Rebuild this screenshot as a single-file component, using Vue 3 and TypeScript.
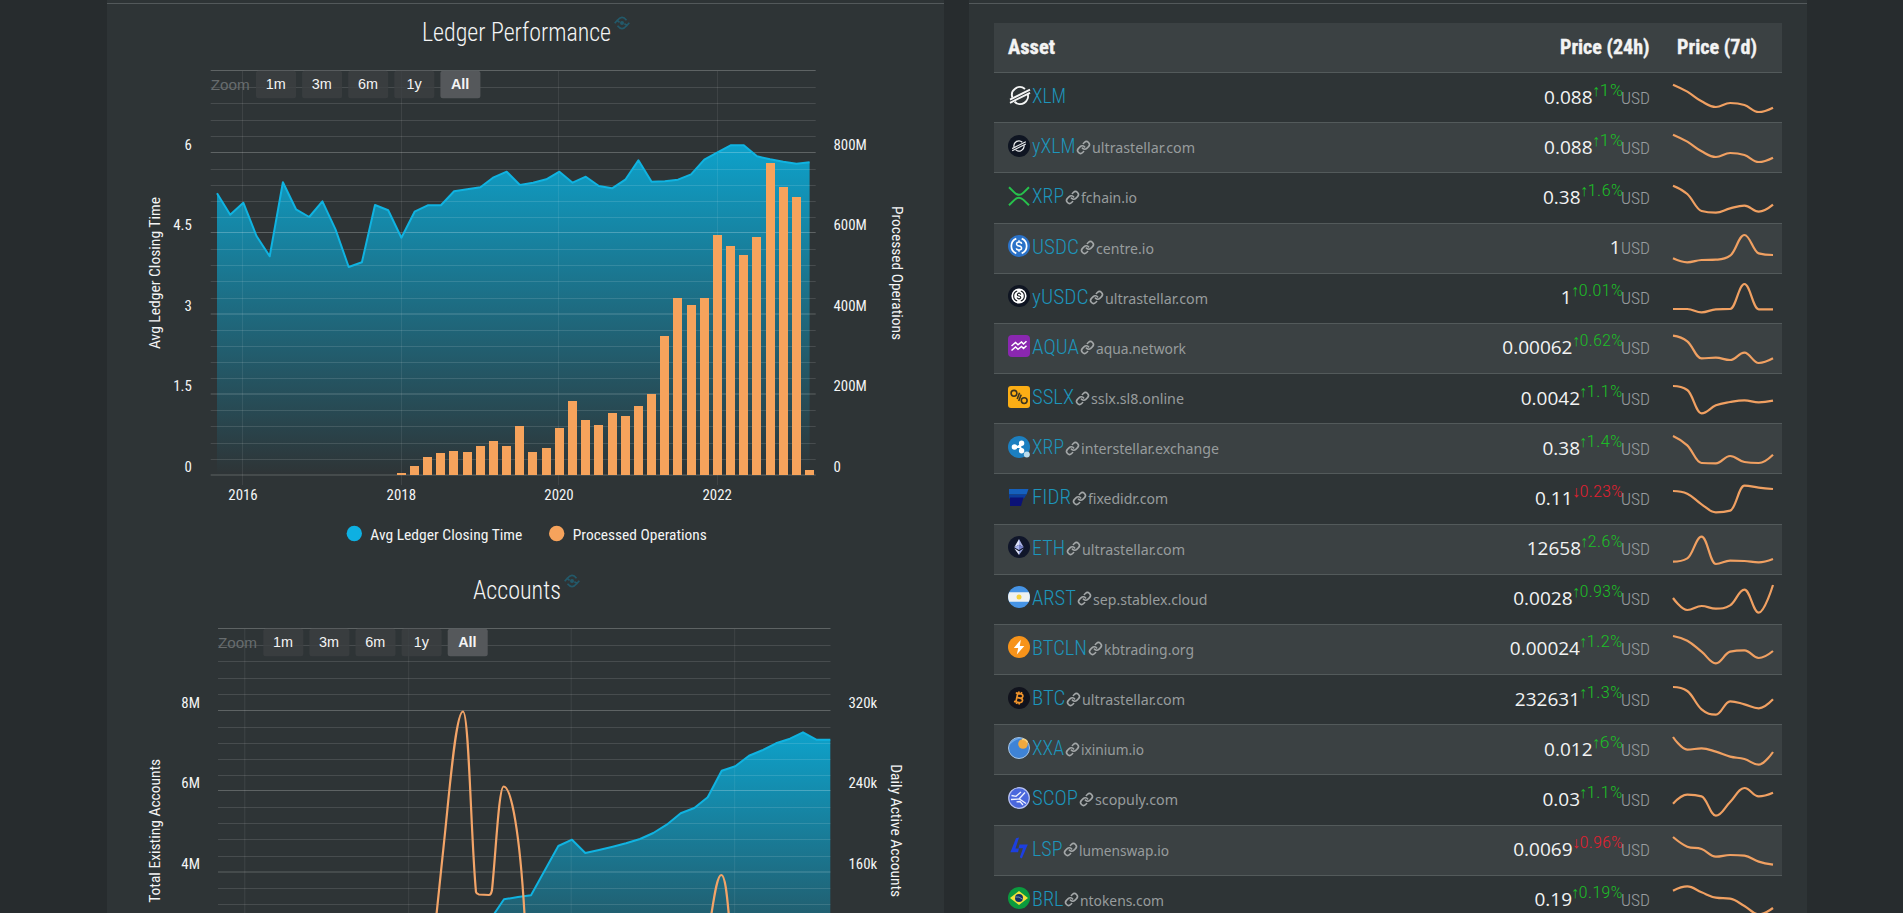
<script setup lang="ts">
interface Label { text: string; x: number; y: number }
interface Chart {
  title: string
  titleWidth: number
  left: number
  right: number
  buttonsX: number
  area: [number, number][]
  bars: [number, number][]
  curve: string
  verticals: number[]
  leftLabels: Label[]
  rightLabels: Label[]
  years: Label[]
  leftTitle: { text: string; mid: number; length: number }
  rightTitle: { text: string; mid: number; length: number; x: number }
  legend: boolean
}
interface Asset {
  icon: string
  code: string
  width: number
  domain?: string
  domainWidth?: number
  price: string
  change?: string
  changeWidth?: number
  trend: number[]
}

const BASE = 475
const STEP = 13.17
const zoomButtons = ['1m', '3m', '6m', '1y', 'All']

const closing = [
  193.3, 214.7, 202.7, 236, 256.3, 182.3, 209.3, 217, 201.3, 229.3, 267, 262.3, 205, 210.3, 237.7, 211.7,
  205.3, 205.3, 191.3, 189.3, 187.3, 177.3, 171.7, 185, 182.7, 179.3, 171.7, 182.7, 176.7, 186, 188.3, 179.7,
  160.3, 181.7, 181.3, 179.7, 174.3, 159.7, 152.3, 145.3, 145.3, 156.3, 159.3, 161.7, 163.7, 162.3,
]
const operations = [
  473, 466, 457, 453.3, 451, 452, 446, 441, 446, 426, 452, 448.3, 428.3, 401, 420, 424.7, 413.3, 416, 406,
  393.7, 336, 298.3, 305, 298.3, 234.7, 246, 255, 237, 163.3, 187.3, 197.3, 469.7,
]
const majors = [70.5, 152.5, 232.5, 314, 394, 475]
const minors = majors.slice(0, 5).flatMap((y, i) => [1, 2, 3, 4].map((k) => Math.round(y + ((majors[i + 1] - y) * k) / 5) + 0.5))

const ticks = (texts: string[], x: number, ys: number[]): Label[] => texts.map((text, i) => ({ text, x, y: ys[i] }))

const charts: Chart[] = [
  {
    title: 'Ledger Performance',
    titleWidth: 189,
    left: 210.7,
    right: 815.7,
    buttonsX: 256,
    area: closing.map((y, i) => [217 + i * STEP, y]),
    bars: operations.map((y, i) => [Math.round(217 + (i + 14) * STEP - 4.6), Math.round(y)]),
    curve: '',
    verticals: [242.5, 401.5, 558.5, 717.5],
    leftLabels: ticks(['6', '4.5', '3', '1.5', '0'], 191.9, [149.7, 229.7, 310.7, 390.7, 471.7]),
    rightLabels: ticks(['800M', '600M', '400M', '200M', '0'], 833.5, [149.7, 229.7, 310.7, 390.7, 471.7]),
    years: [['2016', 243], ['2018', 401.3], ['2020', 559], ['2022', 717.2]].map(([t, x]) => ({ text: String(t), x: Number(x), y: 499.5 })),
    leftTitle: { text: 'Avg Ledger Closing Time', mid: 273, length: 152 },
    rightTitle: { text: 'Processed Operations', mid: 273, length: 134, x: 892 },
    legend: true,
  },
  {
    title: 'Accounts',
    titleWidth: 88,
    left: 218,
    right: 830.5,
    buttonsX: 263.3,
    area: [
      [477, 372], [490.7, 361], [504, 341.3], [518, 339], [531, 337.3], [558.3, 288], [572, 281.7], [585.3, 295],
      [599, 292], [612.7, 288.7], [626, 285.3], [640, 281], [653.3, 275], [666.7, 266.7], [680.7, 255.3],
      [694.3, 250], [707.7, 239.3], [721.7, 212.7], [735.3, 208.3], [749, 197.7], [762.3, 192.3], [776, 185.3],
      [790, 180.7], [803, 174.3], [816.3, 181.7], [830.3, 181.7],
    ],
    bars: [],
    curve:
      'M435.6 365L445 275C450 227 456 153.5 463 153.5C469 153.5 471 282 476 334Q476.5 336 479 336.5L489 337Q491 337 492 332C496 292 499 228 503.7 228.5C511 229 520 272 525 365M710 365C714 340 717 317 721.3 317C725 317 727 335 729.5 365',
    verticals: [244.8, 408.7, 571.2, 734.7],
    leftLabels: ticks(['8M', '6M', '4M'], 199.9, [149.5, 229.5, 310.5]),
    rightLabels: ticks(['320k', '240k', '160k'], 848.5, [149.5, 229.5, 310.5]),
    years: [],
    leftTitle: { text: 'Total Existing Accounts', mid: 272.8, length: 144 },
    rightTitle: { text: 'Daily Active Accounts', mid: 272.7, length: 133, x: 891.3 },
    legend: false,
  },
]

const linePath = (pts: [number, number][]) => 'M' + pts.map((p) => p.map((n) => n.toFixed(1)).join(' ')).join('L')
const areaPath = (pts: [number, number][]) => `${linePath(pts)}V${BASE}H${pts[0][0]}Z`

const icons: Record<string, string> = {
  xlm: '<g fill="none" stroke="#f4f5f5" stroke-width="1.9"><path d="M4.4 12.6A7.9 7.9 0 0 1 17 4M6.6 16.8A7.9 7.9 0 0 0 19.6 8.6"/><path d="M2 14.600L22 4.600M2 17.800L22 7.800"/></g>',
  yxlm: '<circle cx="11" cy="11" r="11" fill="#0f1522"/><g fill="none" stroke="#e8eaec" stroke-width="1.2"><path d="M6.1 12.2A5 5 0 0 1 14.3 7.2M7.5 14.6A5 5 0 0 0 15.9 9.9"/><path d="M4.2 13.6L17.8 6.8M4.2 15.8L17.8 9"/></g>',
  xrp: '<g fill="none" stroke="#27c24c" stroke-width="2"><path d="M1 2.2L6.5 7.6Q11 12 15.5 7.6L21 2.2M1 20.3L6.5 14.9Q11 10.5 15.5 14.9L21 20.3"/></g>',
  usdc: '<circle cx="11" cy="11" r="11" fill="#2b72c8"/><g fill="none" stroke="#fff" stroke-width="1.7"><path d="M8.3 3.6A8 8 0 0 0 8.3 18.4M13.7 3.6A8 8 0 0 1 13.7 18.4"/><path d="M13.6 8.8Q13.3 7 11 7T8.5 9Q8.5 10.6 11 11T13.6 13Q13.6 15 11 15T8.4 13.2M11 5.2V7M11 15V16.8" stroke-width="1.5"/></g>',
  yusdc: '<circle cx="11" cy="11" r="11" fill="#0f1522"/><circle cx="11" cy="11" r="7.6" fill="#fff"/><g fill="none" stroke="#15191f" stroke-width="1.1"><path d="M9.2 6A5.3 5.3 0 0 0 9.2 16M12.8 6A5.3 5.3 0 0 1 12.8 16"/><path d="M12.8 9.6Q12.6 8.3 11 8.3T9.3 9.7Q9.3 10.7 11 11T12.8 12.3Q12.8 13.7 11 13.7T9.2 12.5M11 7.2V8.3M11 13.7V14.8"/></g>',
  aqua: '<rect width="22" height="22" rx="4" fill="#8a27b0"/><path d="M3.5 11L7.5 7.5L10 9.8L13.5 7L15.5 9L18.5 6.2M3.5 15.5L7.5 12L10 14.3L13.5 11.5L15.5 13.5L18.5 10.7" fill="none" stroke="#fff" stroke-width="1.5"/>',
  sslx: '<rect width="22" height="22" rx="3" fill="#fcae15"/><g fill="none" stroke="#3c3420" stroke-width="1.6"><circle cx="6" cy="7.3" r="2.9"/><circle cx="16.2" cy="14.6" r="2.9"/><path d="M11.6 6.8L9.2 13M13.2 8.6L10.7 15"/></g>',
  ripple: '<circle cx="11" cy="11" r="11" fill="#1c7fc0"/><g stroke="#fff" stroke-width="2" fill="#fff"><path d="M7 11H12L13.5 7.5M12 11L14 14.5"/><circle cx="6.5" cy="11" r="1.8"/><circle cx="13.6" cy="7.3" r="1.7"/><circle cx="13.6" cy="14.8" r="1.7"/></g><circle cx="18.8" cy="18.5" r="3" fill="#b9dced"/>',
  fidr: '<path d="M1 3H20.5L18.5 8.5H1Z" fill="#1560bd"/><path d="M1 8.5H18.5L16 12.5H1Z" fill="#0b3d9c"/><path d="M2 11.5H15.5L13 20H2Z" fill="#0b1277"/>',
  eth: '<circle cx="11" cy="11" r="11" fill="#10162a"/><path d="M11 3L6.3 11.2L11 8.8Z" fill="#dfe3fb"/><path d="M11 3L15.7 11.2L11 8.8Z" fill="#aab3e6"/><path d="M6.3 11.2L11 8.8V14Z" fill="#aab5f0"/><path d="M15.7 11.2L11 8.8V14Z" fill="#7884cc"/><path d="M6.3 12.4L11 15.2V19Z" fill="#e3e6fb"/><path d="M15.7 12.4L11 15.2V19Z" fill="#98a3de"/>',
  arst: '<circle cx="11" cy="11" r="11" fill="#4694e6"/><path d="M1.2 6.3H20.8A11 11 0 0 1 20.8 15.7H1.2A11 11 0 0 1 1.2 6.3Z" fill="#eef1f2"/><circle cx="11" cy="11" r="2.5" fill="#f5d03c"/>',
  btcln: '<circle cx="11" cy="11" r="11" fill="#f7931a"/><path d="M12.8 3.8L5.8 11.9H10.2L8.8 18.4L16.3 9.9H11.8Z" fill="#fff"/>',
  btc: '<circle cx="11" cy="11" r="11" fill="#11131d"/><g transform="rotate(12 11 11)" fill="none" stroke="#f0932b" stroke-width="1.7"><path d="M6.8 6.6H12Q14.4 6.6 14.4 8.7T12 10.9H8.8M12 10.9Q15 10.9 15 13.1T12 15.4H6.8M8.8 6.6V15.4M9.8 4.6V6.6M12.3 4.6V6.6M9.8 15.4V17.4M12.3 15.4V17.4"/></g>',
  xxa: '<circle cx="11" cy="11" r="10.5" fill="#3e83d6" stroke="#a9c6e4" stroke-width="1"/><path d="M1.2 9A10.5 10.5 0 0 1 14 1.2Q5 3 1.2 9Z" fill="#6ba7e8"/><circle cx="15" cy="7" r="4.8" fill="#f0a93f"/><path d="M14 2.5A4.8 4.8 0 0 1 19.5 5.5" stroke="#f7d07e" stroke-width="1.5" fill="none"/>',
  scop: '<circle cx="11" cy="11" r="10.3" fill="#4a67dd" stroke="#b7c2f3" stroke-width="1.2"/><path d="M3 12.5L11 12L17 5.5M3.5 8.5L8 9.3L13 5M11.500 12L18 16.500M8.500 14.800L12 14.500L15 18" fill="none" stroke="#eef1ff" stroke-width="1.3"/>',
  lsp: '<path d="M8 1.3L11 .6L7.5 11.500H11L10 15.200H2.400Z" fill="#1c3fe0"/><path d="M11.500 7.600H19.800L13.800 21.500L11.800 20.300L15 11.300H10.500Z" fill="#1c3fe0"/>',
  brl: '<circle cx="11" cy="11" r="11" fill="#0b9a3e"/><path d="M11 4L20 11L11 18L2 11Z" fill="#f3e13a"/><circle cx="11" cy="11" r="4" fill="#143063"/><path d="M7.3 10Q11 9 14.8 12.3" stroke="#8fa8b8" stroke-width=".8" fill="none"/>',
}

const assets: Asset[] = [
  { icon: 'xlm', code: 'XLM', width: 34, price: '0.088', change: '↑1%', changeWidth: 31, trend: [35, 56, 85, 102, 90, 96, 117, 104] },
  { icon: 'yxlm', code: 'yXLM', width: 43.5, domain: 'ultrastellar.com', domainWidth: 103, price: '0.088', change: '↑1%', changeWidth: 31, trend: [35, 56, 85, 102, 90, 96, 117, 104] },
  { icon: 'xrp', code: 'XRP', width: 32, domain: 'fchain.io', domainWidth: 56, price: '0.38', change: '↑1.6%', changeWidth: 43, trend: [38, 63, 114, 119, 106, 98, 116, 95] },
  { icon: 'usdc', code: 'USDC', width: 47, domain: 'centre.io', domainWidth: 58, price: '1', trend: [106, 118, 111, 110, 98, 36, 91, 96] },
  { icon: 'yusdc', code: 'yUSDC', width: 56.5, domain: 'ultrastellar.com', domainWidth: 103, price: '1', change: '↑0.01%', changeWidth: 52, trend: [108, 108, 118, 109, 108, 33, 109, 109] },
  { icon: 'aqua', code: 'AQUA', width: 47, domain: 'aqua.network', domainWidth: 90, price: '0.00062', change: '↑0.62%', changeWidth: 51, trend: [38, 55, 106, 104, 111, 89, 120, 106] },
  { icon: 'sslx', code: 'SSLX', width: 42, domain: 'sslx.sl8.online', domainWidth: 93, price: '0.0042', change: '↑1.1%', changeWidth: 43.5, trend: [36, 48, 118, 94, 84, 79, 85, 80] },
  { icon: 'ripple', code: 'XRP', width: 32, domain: 'interstellar.exchange', domainWidth: 138, price: '0.38', change: '↑1.4%', changeWidth: 43.5, trend: [36, 64, 117, 118, 96, 114, 117, 92] },
  { icon: 'fidr', code: 'FIDR', width: 39, domain: 'fixedidr.com', domainWidth: 80, price: '0.11', change: '↓0.23%', changeWidth: 51, trend: [51, 59, 91, 115, 110, 35, 41, 45] },
  { icon: 'eth', code: 'ETH', width: 33, domain: 'ultrastellar.com', domainWidth: 103, price: '12658', change: '↑2.6%', changeWidth: 42.5, trend: [113, 103, 38, 120, 110, 111, 115, 105] },
  { icon: 'arst', code: 'ARST', width: 44, domain: 'sep.stablex.cloud', domainWidth: 114.5, price: '0.0028', change: '↑0.93%', changeWidth: 51, trend: [72, 108, 96, 104, 94, 47, 116, 33] },
  { icon: 'btcln', code: 'BTCLN', width: 55, domain: 'kbtrading.org', domainWidth: 90, price: '0.00024', change: '↑1.2%', changeWidth: 43.5, trend: [36, 50, 83, 118, 83, 79, 102, 81] },
  { icon: 'btc', code: 'BTC', width: 33.5, domain: 'ultrastellar.com', domainWidth: 103, price: '232631', change: '↑1.3%', changeWidth: 43.5, trend: [36, 48, 103, 119, 79, 88, 100, 73] },
  { icon: 'xxa', code: 'XXA', width: 32, domain: 'ixinium.io', domainWidth: 63, price: '0.012', change: '↑6%', changeWidth: 31, trend: [36, 74, 70, 80, 95, 102, 119, 81] },
  { icon: 'scop', code: 'SCOP', width: 46, domain: 'scopuly.com', domainWidth: 83, price: '0.03', change: '↑1.1%', changeWidth: 43.5, trend: [86, 59, 64, 122, 81, 39, 64, 53] },
  { icon: 'lsp', code: 'LSP', width: 30.5, domain: 'lumenswap.io', domainWidth: 90, price: '0.0069', change: '↓0.96%', changeWidth: 51, trend: [36, 65, 72, 95, 90, 92, 110, 119] },
  { icon: 'brl', code: 'BRL', width: 31.5, domain: 'ntokens.com', domainWidth: 84, price: '0.19', change: '↑0.19%', changeWidth: 51.5, trend: [47, 34, 52, 68, 71, 93, 118, 99] },
]

/* Smoothed line whose control points never overshoot their neighbours. */
function spline(values: number[]): string {
  const dx = 100 / (values.length - 1)
  const pts = values.map((v, i) => ({ x: i * dx, y: v / 3 }))
  const s = 1.5
  let d = `M${pts[0].x} ${pts[0].y.toFixed(2)}`
  let out = { x: pts[0].x, y: pts[0].y }
  for (let i = 1; i < pts.length; i++) {
    const a = pts[i - 1]
    const p = pts[i]
    const b = pts[i + 1]
    let lx = p.x
    let ly = p.y
    let rx = p.x
    let ry = p.y
    if (b) {
      lx = (s * p.x + a.x) / (s + 1)
      ly = (s * p.y + a.y) / (s + 1)
      rx = (s * p.x + b.x) / (s + 1)
      ry = (s * p.y + b.y) / (s + 1)
      const fix = ((ry - ly) * (rx - p.x)) / (rx - lx) + p.y - ry
      ly += fix
      ry += fix
      if (ly > a.y && ly > p.y) { ly = Math.max(a.y, p.y); ry = 2 * p.y - ly }
      else if (ly < a.y && ly < p.y) { ly = Math.min(a.y, p.y); ry = 2 * p.y - ly }
      if (ry > b.y && ry > p.y) { ry = Math.max(b.y, p.y); ly = 2 * p.y - ry }
      else if (ry < b.y && ry < p.y) { ry = Math.min(b.y, p.y); ly = 2 * p.y - ry }
    }
    d += `C${[out.x, out.y, lx, ly, p.x, p.y].map((n) => n.toFixed(2)).join(' ')}`
    out = { x: rx, y: ry }
  }
  return d
}
</script>

<template>
  <main class="page">
    <section class="panel charts">
      <article v-for="(c, ci) in charts" :key="c.title" class="chart">
        <h3 class="chart-title">
          <svg :width="c.titleWidth" height="34"><text x="0" y="26" :textLength="c.titleWidth" lengthAdjust="spacingAndGlyphs">{{ c.title }}</text></svg>
          <svg class="embed" width="16" height="14" viewBox="0 0 16 14">
            <path d="M3.200 4.500Q8 -1.500 12.500 4.200M3.500 9.800Q8 15.500 12.800 9.500M.7 7.300L3.200 4.500L5.600 6.400M15.300 6.700L12.800 9.500L10.400 7.600" />
            <circle cx="8" cy="7" r="2" />
          </svg>
        </h3>
        <svg class="plot" width="837" height="502" viewBox="107 60 837 502">
          <defs>
            <linearGradient :id="`fill-${ci}`" x1="0" y1="0" x2="0" y2="1">
              <stop offset="0" stop-color="#08b5e5" stop-opacity=".85" />
              <stop offset="1" stop-color="#08b5e5" stop-opacity="0" />
            </linearGradient>
          </defs>
          <path :d="areaPath(c.area)" :fill="`url(#fill-${ci})`" />
          <path v-for="y in minors" :key="`n${y}`" class="minor" :d="`M${c.left} ${y}H${c.right}`" />
          <path v-for="y in majors" :key="`j${y}`" class="major" :d="`M${c.left} ${y}H${c.right}`" />
          <path v-for="x in c.verticals" :key="`v${x}`" class="vertical" :d="`M${x} 71V485`" />
          <path class="area-line" :d="linePath(c.area)" />
          <rect v-for="b in c.bars" :key="b[0]" class="bar" :x="b[0]" :y="b[1]" width="9" :height="BASE - b[1]" />
          <path v-if="c.curve" class="curve" :d="c.curve" />
          <g class="zoom">
            <text class="zoom-label" :x="c.left" y="89.700" textLength="39" lengthAdjust="spacingAndGlyphs">Zoom</text>
            <g v-for="(b, i) in zoomButtons" :key="b" :class="{ active: b === 'All' }">
              <rect :x="c.buttonsX + i * 46.1" y="70.700" width="40" height="27.600" rx="2.500" />
              <text :x="c.buttonsX + i * 46.1 + 19.700" y="88.600" text-anchor="middle">{{ b }}</text>
            </g>
          </g>
          <g class="labels">
            <text v-for="l in c.leftLabels" :key="`l${l.text}`" :x="l.x" :y="l.y" text-anchor="end">{{ l.text }}</text>
            <text v-for="l in c.rightLabels" :key="`r${l.text}`" :x="l.x" :y="l.y">{{ l.text }}</text>
            <text v-for="l in c.years" :key="l.text" :x="l.x" :y="l.y" text-anchor="middle">{{ l.text }}</text>
            <text :transform="`translate(160 ${c.leftTitle.mid}) rotate(-90)`" text-anchor="middle" :textLength="c.leftTitle.length" lengthAdjust="spacingAndGlyphs">{{ c.leftTitle.text }}</text>
            <text :transform="`translate(${c.rightTitle.x} ${c.rightTitle.mid}) rotate(90)`" text-anchor="middle" :textLength="c.rightTitle.length" lengthAdjust="spacingAndGlyphs">{{ c.rightTitle.text }}</text>
            <template v-if="c.legend">
              <circle cx="354.300" cy="533.500" r="7.700" fill="#0eb0e2" />
              <text x="370.300" y="539.700" textLength="152" lengthAdjust="spacingAndGlyphs">Avg Ledger Closing Time</text>
              <circle cx="556.700" cy="533.500" r="7.700" fill="#f6a35c" />
              <text x="572.800" y="539.700" textLength="134" lengthAdjust="spacingAndGlyphs">Processed Operations</text>
            </template>
          </g>
        </svg>
      </article>
    </section>

    <section class="panel assets">
      <div class="table">
        <div class="row head">
          <svg width="48" height="30"><text x="0" y="20.400" textLength="47" lengthAdjust="spacingAndGlyphs">Asset</text></svg>
          <svg class="end" width="89.500" height="30"><text x="0" y="20.400" textLength="89.500" lengthAdjust="spacingAndGlyphs">Price (24h)</text></svg>
          <svg class="head-week" width="80" height="30"><text x="0" y="20.400" textLength="80" lengthAdjust="spacingAndGlyphs">Price (7d)</text></svg>
        </div>
        <div v-for="a in assets" :key="a.code + a.domain" class="row">
          <div class="asset">
            <svg class="logo" width="22" height="22" viewBox="0 0 22 22" v-html="icons[a.icon]" />
            <svg class="code" :width="a.width" height="30"><text x="0" y="21" :textLength="a.width" lengthAdjust="spacingAndGlyphs">{{ a.code }}</text></svg>
            <template v-if="a.domain">
              <svg class="link" width="13" height="13" viewBox="1 1 22 22">
                <path d="M10 13a5 5 0 0 0 7.540 .540l3-3a5 5 0 0 0-7.070-7.070l-1.720 1.710M14 11a5 5 0 0 0-7.540-.540l-3 3a5 5 0 0 0 7.070 7.070l1.710-1.710" />
              </svg>
              <svg class="domain" :width="a.domainWidth" height="30"><text x="0" y="21" :textLength="a.domainWidth" lengthAdjust="spacingAndGlyphs">{{ a.domain }}</text></svg>
            </template>
          </div>
          <div class="price">
            <span class="amount">{{ a.price }}</span>
            <svg v-if="a.change && a.changeWidth" class="change" :class="{ down: a.change.startsWith('↓') }" :width="a.changeWidth" height="30">
              <text x="0" y="13.500" textLength="8" lengthAdjust="spacingAndGlyphs">{{ a.change.slice(0, 1) }}</text>
              <text x="7.500" y="14" :textLength="a.changeWidth - 7.5" lengthAdjust="spacingAndGlyphs">{{ a.change.slice(1) }}</text>
            </svg>
            <svg class="usd" :class="{ alone: !a.change }" width="29" height="30"><text x="0" y="21.500" textLength="29" lengthAdjust="spacingAndGlyphs">USD</text></svg>
          </div>
          <svg class="trend" width="100" height="48" viewBox="0 0 100 48"><path :d="spline(a.trend)" /></svg>
        </div>
      </div>
    </section>
  </main>
</template>

<style>
html, body { background: #272c2e; overflow: hidden; }
</style>

<style scoped>
.page {
  display: flex;
  gap: 25px;
  box-sizing: border-box;
  width: 1903px;
  height: 913px;
  padding: 0 96px 0 107px;
  overflow: hidden;
  background: #272c2e;
  color: #f2f3f3;
  font-family: "Roboto Condensed", Roboto, "Liberation Sans", sans-serif;
  font-stretch: 75%;
}
.page svg { display: block; flex: none; overflow: visible; }
.panel { background: #2e3436; box-sizing: border-box; height: 913px; overflow: hidden; padding-top: 3px; }
.panel::before { content: ""; display: block; height: 1px; background: #53595b; }
.charts { width: 837px; }
.assets { width: 838px; }
.chart { height: 558px; }
.chart-title { display: flex; gap: 3px; justify-content: center; height: 56px; margin: 0; padding: 11px 0 0 1px; box-sizing: border-box; font-weight: 300; }
.chart-title text { font-size: 25px; fill: #f4f5f5; }
.embed { margin-top: 1px; fill: none; stroke: #23596a; stroke-width: 1.7; }
.embed circle { fill: #23596a; stroke: none; }
.minor { stroke: #fff; stroke-opacity: .12; fill: none; }
.vertical { stroke: #fff; stroke-opacity: .08; fill: none; }
.major { stroke: #fff; stroke-opacity: .23; fill: none; }
.area-line { fill: none; stroke: #10b3e1; stroke-width: 2; stroke-linejoin: round; }
.bar { fill: #f6a35c; }
.curve { fill: none; stroke: #f3a468; stroke-width: 2.2; }
.zoom { font-family: "Liberation Sans", Arial, sans-serif; font-stretch: normal; font-size: 14.4px; }
.zoom text { fill: #f4f4f4; }
.zoom rect { fill: #3c4042; fill-opacity: .8; }
.zoom .zoom-label { fill: #676c6e; }
.zoom .active rect { fill: #55585b; fill-opacity: 1; }
.zoom .active text { font-weight: bold; }
.labels { font-size: 14.9px; }
.labels text { fill: #f4f5f5; }
.table { margin: 19px 0 0 24.5px; width: 788.5px; }
.row { display: flex; align-items: flex-start; height: 50.17px; box-sizing: border-box; padding-left: 14.5px; border-bottom: 1px solid #535a5b; }
.row:nth-child(odd) { background: #3b4143; }
.row:nth-child(even) { background: #2e3436; }
.head { font-weight: 700; padding-top: 11px; }
.head text { font-size: 20px; fill: #f3f3f3; stroke: #f3f3f3; stroke-width: .35px; }
.end { margin-left: auto; }
.head-week { margin: 0 25px 0 28px; }
.asset { display: flex; align-items: flex-start; padding-top: 9px; }
.logo { margin-top: 2.5px; }
.code { margin-left: 1.7px; }
.code text { font-size: 19.3px; font-weight: 300; font-stretch: normal; fill: #1d95bb; }
.link { margin: 8.5px 2px 0 2.3px; fill: none; stroke: #a3a7a8; stroke-width: 2.7; stroke-linecap: round; }
.domain text { font-family: "Noto Sans", sans-serif; font-size: 14.4px; font-stretch: normal; fill: #979c9d; }
.price { display: flex; align-items: flex-start; margin-left: auto; padding-top: 8.5px; }
.amount { font: 400 19px/30px "Open Sans", "Noto Sans", sans-serif; }
.change { margin-left: -1px; }
.change text { font-size: 16px; font-weight: 300; font-stretch: normal; fill: #1dbb27; }
.change.down text { fill: #e01f30; }
.usd { margin-left: -2px; }
.usd.alone { margin-left: 0; }
.usd text { font-size: 16px; font-weight: 300; font-stretch: normal; fill: #9a9fa0; }
.trend { margin: -.5px 9.5px 0 23px; }
.trend path { fill: none; stroke: #f0a062; stroke-width: 2.2; }
</style>
